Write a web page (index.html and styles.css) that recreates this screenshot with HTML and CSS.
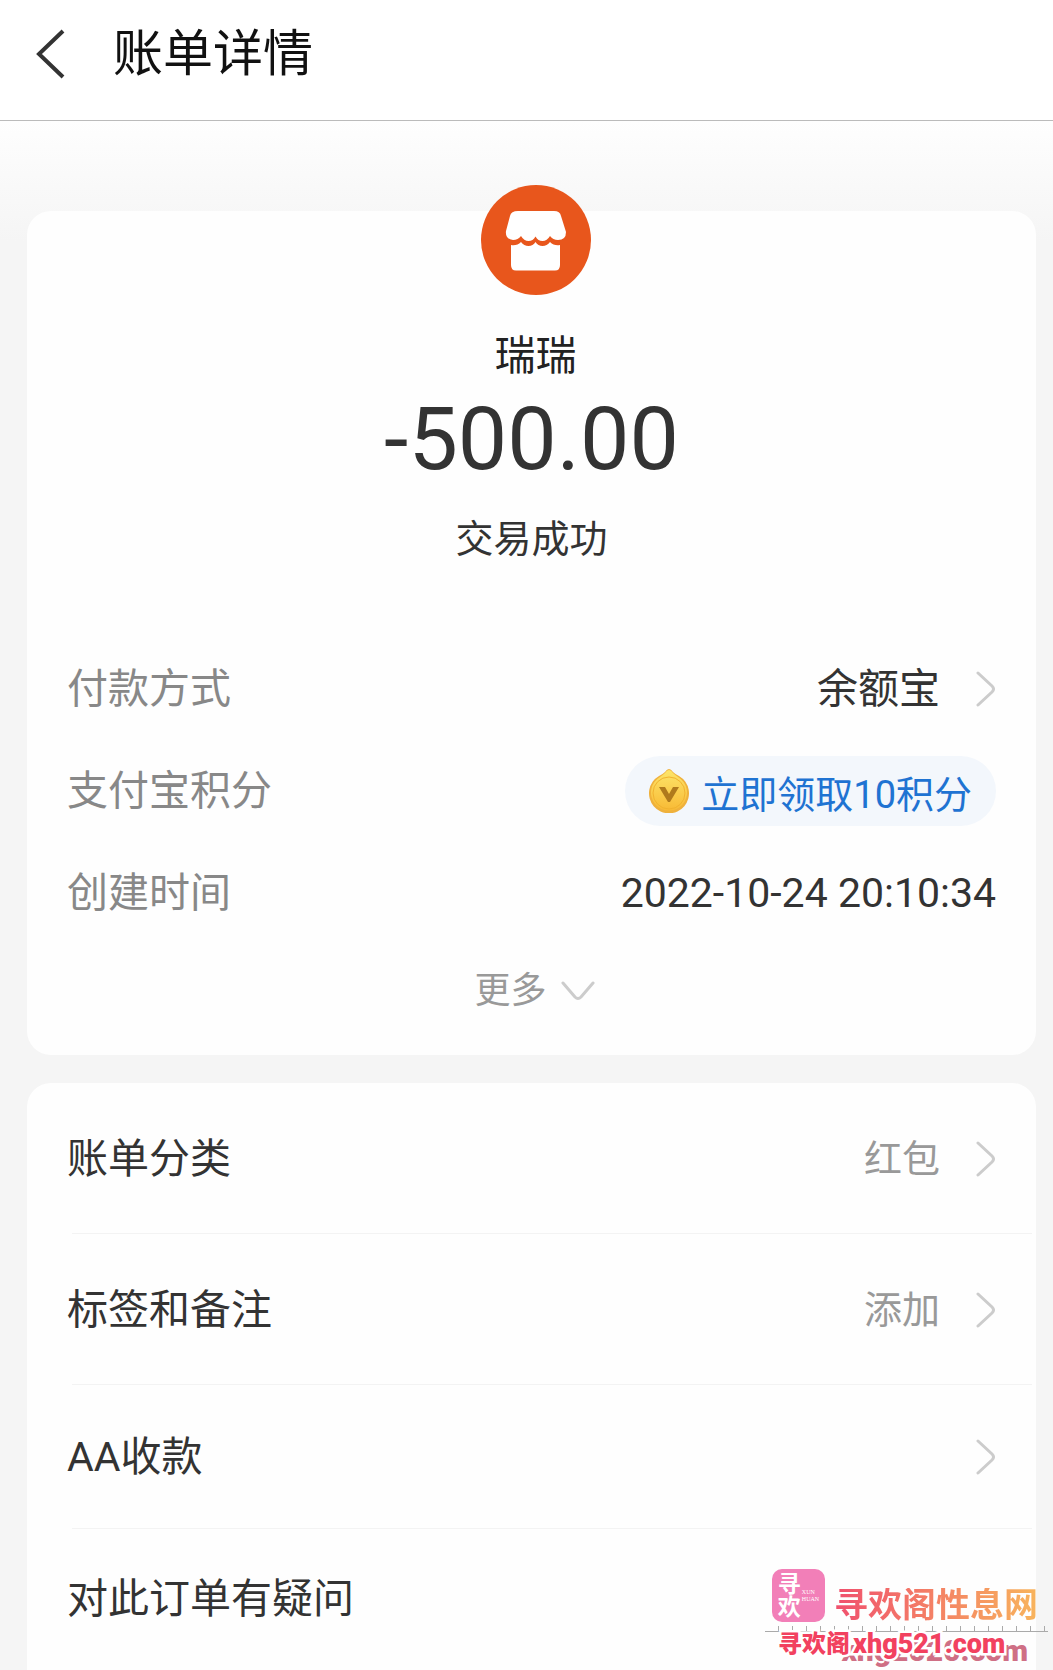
FILE: index.html
```html
<!DOCTYPE html>
<html lang="zh-CN">
<head>
    <meta charset="UTF-8">
    <meta name="viewport" content="width=device-width, initial-scale=1.0">
    <title>账单详情</title>
    <link rel="stylesheet" href="styles.css">
</head>
<body>
    <header class="header">
        <button type="button" class="back-btn" aria-label="返回">
            <svg width="30" height="50" viewBox="0 0 30 50"><path d="M27 2L3 25L27 48" fill="none" stroke="#333" stroke-width="4"/></svg>
        </button>
        <h1>账单详情</h1>
    </header>

    <main class="content">
        <!-- Bill summary -->
        <section class="card summary">
            <div class="merchant">
                <svg class="logo" width="110" height="110" viewBox="0 0 110 110">
                    <circle cx="55" cy="55" r="55" fill="#e8561c"/>
                    <path d="M37 26H73Q79 26 80 31L85 47Q85 55 77 55Q72 55 69 51Q66 56 61.500 56Q57 56 54.500 51.500Q52 56 47.500 56Q43 56 40 51Q37 55 32 55Q24 54 25 46L29 31Q30 26 37 26Z" fill="#fff"/>
                    <path d="M30 60Q36 61 40 57Q43 61 47.500 61Q52 61 54.500 57Q57 61 61.500 61Q66 61 69 57Q73 61 79 60V80Q79 85.500 74 85.500H35Q30 85.500 30 80Z" fill="#fff"/>
                </svg>
                <h2>瑞瑞</h2>
            </div>
            <p class="amount">-500.00</p>
            <p class="status">交易成功</p>

            <dl class="details">
                <div class="detail">
                    <dt>付款方式</dt>
                    <dd>余额宝
                        <svg class="arrow" width="20" height="36" viewBox="0 0 20 36"><path d="M2 2L16 15Q19 18 16 21L2 34"/></svg>
                    </dd>
                </div>
                <div class="detail">
                    <dt>支付宝积分</dt>
                    <dd>
                        <button type="button" class="points-btn">
                            <svg width="40" height="44" viewBox="0 0 40 44">
                                <defs>
                                    <linearGradient id="gold" x1="0" y1="0" x2="0" y2="1">
                                        <stop offset="0" stop-color="#fde56a"/>
                                        <stop offset="1" stop-color="#f8ba35"/>
                                    </linearGradient>
                                </defs>
                                <path d="M20 0Q22 0 24 3Q26 5 30 7A20 20 0 1 1 10 7Q14 5 16 3Q18 0 20 0Z" fill="#efb13c"/>
                                <path d="M20 1Q22 1 24 4Q26 6 29 8A18 18 0 1 1 11 8Q14 6 16 4Q18 1 20 1Z" fill="url(#gold)"/>
                                <circle cx="20" cy="24" r="16" fill="none" stroke="#f1b22f"/>
                                <path d="M10 18H16L20 25L24 18H30L21 33H19Z" fill="#b07a1c"/>
                            </svg>
                            立即领取10积分
                        </button>
                    </dd>
                </div>
                <div class="detail">
                    <dt>创建时间</dt>
                    <dd>2022-10-24 20:10:34</dd>
                </div>
            </dl>

            <button type="button" class="more-btn">更多
                <svg class="arrow" width="34" height="20" viewBox="0 0 34 20"><path d="M2 2L14 16Q17 19 20 16L32 2"/></svg>
            </button>
        </section>

        <!-- Bill options -->
        <nav class="card options">
            <a href="#" class="option option-value">账单分类
                <span>红包</span>
                <svg class="arrow" width="20" height="36" viewBox="0 0 20 36"><path d="M2 2L16 15Q19 18 16 21L2 34"/></svg>
            </a>
            <a href="#" class="option option-value">标签和备注
                <span>添加</span>
                <svg class="arrow" width="20" height="36" viewBox="0 0 20 36"><path d="M2 2L16 15Q19 18 16 21L2 34"/></svg>
            </a>
            <a href="#" class="option">AA收款
                <svg class="arrow" width="20" height="36" viewBox="0 0 20 36"><path d="M2 2L16 15Q19 18 16 21L2 34"/></svg>
            </a>
            <a href="#" class="option">对此订单有疑问</a>
        </nav>
    </main>

    <!-- Watermark -->
    <div class="watermark">
        <div class="brand">
            <div class="badge">
                <b>寻欢</b>
                <small>XUN<br>HUAN</small>
            </div>
            <span class="brand-name">寻欢阁性息网</span>
        </div>
        <div class="ruler"></div>
        <span class="site-shadow">xhg2020.com</span>
        <div class="site"><b>寻欢阁</b><span>xhg521.com</span></div>
    </div>
</body>
</html>
```

FILE: styles.css
```css
* {
    box-sizing: border-box;
}

body {
    display: flex;
    flex-direction: column;
    position: relative;
    min-height: 100vh;
    margin: 0;
    overflow-x: hidden;
    font-family: Roboto, "Noto Sans CJK SC", sans-serif;
    font-size: 41px;
    line-height: 60px;
    color: #333;
    background-color: #f5f5f5;
}

h1, h2, p, dl, dd {
    margin: 0;
}

button {
    padding: 0;
    border: none;
    background: none;
    font-family: inherit;
    cursor: pointer;
}

svg {
    display: block;
    flex-shrink: 0;
}

.header {
    display: flex;
    align-items: center;
    gap: 47px;
    height: 121px;
    padding: 0 36px 12px;
    border-bottom: 1px solid #bbb;
    background-color: #fff;
}

h1 {
    font-size: 50px;
    font-weight: 400;
    color: #111;
}

.content {
    flex: 1;
    display: flex;
    flex-direction: column;
    gap: 28px;
    padding: 90px 17px 0 27px;
    background: linear-gradient(#fefefe, #f5f5f5 120px);
}

.card {
    border-radius: 24px;
    background-color: #fefefe;
}

.summary {
    display: flex;
    flex-direction: column;
    align-items: center;
    padding: 0 40px 34px;
}

.merchant {
    display: flex;
    flex-direction: column;
    align-items: center;
    gap: 31px;
    margin-top: -26px;
    padding-left: 8px;
}

h2 {
    font-size: 41px;
    font-weight: 400;
    color: #222;
}

.amount {
    margin-top: 5px;
    font-size: 88px;
    line-height: 96px;
}

.status {
    margin-top: 22px;
    font-size: 38px;
}

.details {
    width: 100%;
    margin-top: 69px;
}

.detail {
    display: flex;
    align-items: center;
    justify-content: space-between;
    min-height: 102px;
}

dt {
    color: #888;
}

dd {
    display: flex;
    align-items: center;
    gap: 36px;
}

.arrow path {
    fill: none;
    stroke: #ccc;
    stroke-width: 3;
    stroke-linecap: round;
}

.points-btn {
    display: flex;
    align-items: center;
    gap: 12px;
    height: 70px;
    padding: 0 24px;
    border-radius: 35px;
    font-size: 38px;
    color: #1f73d2;
    background-color: #f3f7fc;
}

.more-btn {
    display: flex;
    align-items: center;
    gap: 14px;
    margin-top: 17px;
    padding-left: 6px;
    font-size: 36px;
    line-height: 60px;
    color: #999;
}

.options {
    flex: 1;
    border-radius: 24px 24px 0 0;
}

.option {
    display: flex;
    align-items: center;
    gap: 36px;
    min-height: 140px;
    padding: 0 40px;
    color: #333;
    text-decoration: none;
}

.option:not(:last-child) {
    min-height: 144px;
    background: linear-gradient(#f3f3f3, #f3f3f3) 45px 100% / calc(100% - 49px) 1px no-repeat;
}

.option.option-value {
    min-height: 151px;
}

.option span {
    margin-left: auto;
    font-size: 38px;
    color: #999;
}

.option > .arrow:only-child {
    margin-left: auto;
}

/* Watermark laid over the bottom corner of the page */
.watermark {
    position: absolute;
    right: 5px;
    bottom: 14px;
    width: 283px;
    pointer-events: none;
}

.brand {
    display: flex;
    align-items: flex-end;
    gap: 9px;
    padding-left: 7px;
}

.badge {
    display: flex;
    align-items: center;
    justify-content: center;
    width: 53px;
    height: 53px;
    border-radius: 10px;
    color: #fff;
    background-color: #f27fb8;
}

.badge b {
    width: 24px;
    font-size: 23px;
    line-height: 23px;
}

.badge small {
    font-family: "Liberation Serif", serif;
    font-size: 6px;
    line-height: 7px;
}

.brand-name {
    font-size: 34px;
    font-weight: 700;
    line-height: 34px;
    color: transparent;
    background: linear-gradient(90deg, #f0506e, #f8b45c);
    background-clip: text;
}

.ruler {
    height: 6px;
    margin-top: 4px;
    border-bottom: 1px solid #aaa;
    background: repeating-linear-gradient(90deg, transparent 0 13px, #aaa 13px 14px);
}

.site {
    display: flex;
    align-items: center;
    gap: 3px;
    position: relative;
    padding-left: 13px;
    font-size: 24px;
    font-weight: 900;
    line-height: 24px;
    color: #f2415f;
    paint-order: stroke fill;
    -webkit-text-stroke: 5px #fff;
}

.site span {
    font-size: 27px;
}

.site-shadow {
    position: absolute;
    right: 20px;
    bottom: -10px;
    font-size: 30px;
    font-weight: 900;
    line-height: 30px;
    color: #cf6f85;
}
```
